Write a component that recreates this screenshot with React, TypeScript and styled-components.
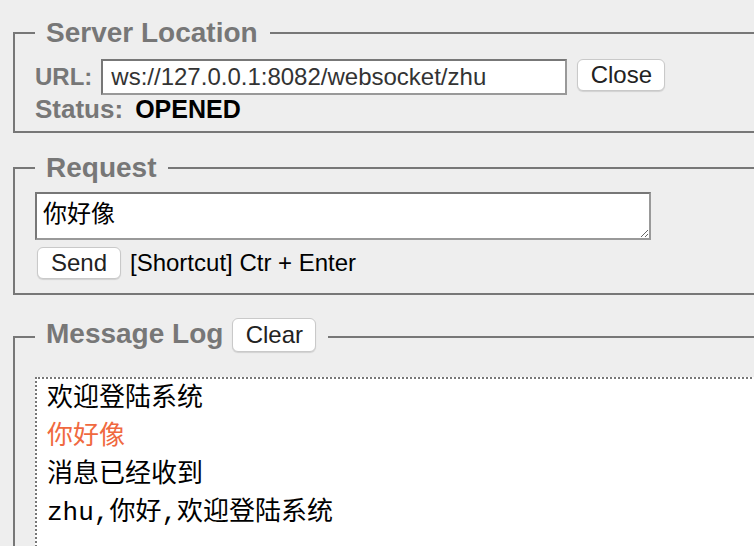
import React from 'react';
import styled, { createGlobalStyle } from 'styled-components';

const GlobalStyle = createGlobalStyle`
  html, body {
    margin: 0;
    padding: 0;
    background: #eeeeee;
    overflow: hidden;
  }
  body {
    font-family: "Liberation Sans", "Noto Sans CJK SC", Arial, sans-serif;
    font-size: 24px;
    color: #000;
  }
`;

const Page = styled.div`
  width: 1000px;
  padding-left: 13px;
`;

const Fieldset = styled.fieldset<{ $top: number; $pad: string }>`
  margin: ${(p) => p.$top}px 0 0 0;
  padding: ${(p) => p.$pad};
  border: 2px solid #777;
  width: 900px;
  min-width: 0;
`;

const Legend = styled.legend<{ $height?: number }>`
  display: flex;
  align-items: flex-start;
  padding: 0 12px 0 11px;
  height: ${(p) => (p.$height ? `${p.$height}px` : 'auto')};
  font-size: 28px;
  line-height: 32px;
  font-weight: bold;
  color: #777;
`;

const Row = styled.div<{ $mt?: number }>`
  display: flex;
  align-items: flex-start;
  margin-top: ${(p) => p.$mt ?? 0}px;
`;

const Label = styled.span`
  font-weight: bold;
  color: #777;
  line-height: 36px;
  margin-right: 9px;
`;

const UrlInput = styled.input`
  box-sizing: border-box;
  width: 466px;
  height: 36px;
  margin: 0;
  padding: 0 8px;
  border: 2px solid;
  border-color: #777 #999 #999 #777;
  background: #fff;
  font-family: "Liberation Sans", Arial, sans-serif;
  font-size: 24px;
  color: #333;
  outline: none;
`;

const Button = styled.button<{ $w: number; $h: number; $ml?: number }>`
  box-sizing: border-box;
  width: ${(p) => p.$w}px;
  height: ${(p) => p.$h}px;
  margin: 0 0 0 ${(p) => p.$ml ?? 0}px;
  padding: 0;
  border: 1px solid #c9c9c9;
  border-radius: 6px;
  background: #fff;
  box-shadow: 0 1px 1px rgba(0, 0, 0, 0.12);
  font-family: "Liberation Sans", Arial, sans-serif;
  font-size: 24px;
  font-weight: normal;
  color: #222;
  line-height: 1;
`;

const StatusLine = styled.div`
  display: flex;
  align-items: baseline;
  height: 28px;
  line-height: 28px;
  font-weight: bold;
`;

const StatusLabel = styled.span`
  color: #777;
  font-size: 26px;
`;

const StatusValue = styled.span`
  color: #000;
  font-size: 25px;
  margin-left: 12px;
`;

const RequestBox = styled.textarea`
  display: block;
  box-sizing: border-box;
  width: 616px;
  height: 48px;
  margin: 0;
  padding: 4px 6px 2px;
  border: 2px solid;
  border-color: #777 #999 #999 #777;
  background: #fff;
  font-family: "Liberation Sans", "Noto Sans CJK SC", sans-serif;
  font-size: 24px;
  line-height: 32px;
  color: #000;
  outline: none;
`;

const Hint = styled.span`
  margin-left: 9px;
  line-height: 32px;
`;

const LogBox = styled.div`
  margin-top: 21px;
  min-height: 300px;
  padding: 1px 10px;
  border: 2px dotted #777;
  background: #fff;
  font-family: "Liberation Mono", "Noto Sans CJK SC", monospace;
  font-size: 26px;
  line-height: 38px;
`;

const LogLine = styled.div<{ $color?: string }>`
  color: ${(p) => p.$color ?? '#000'};
  white-space: pre;
`;

const messages = [
  { text: '欢迎登陆系统' },
  { text: '你好像', color: '#f0693f' },
  { text: '消息已经收到' },
  { text: 'zhu,你好,欢迎登陆系统' },
];

export default function App() {
  return (
    <>
      <GlobalStyle />
      <Page>
        <Fieldset $top={17} $pad="10px 0 8px 20px">
          <Legend>Server Location</Legend>
          <Row>
            <Label>URL:</Label>
            <UrlInput defaultValue="ws://127.0.0.1:8082/websocket/zhu" />
            <Button $w={88} $h={32} $ml={10}>Close</Button>
          </Row>
          <StatusLine>
            <StatusLabel>Status:</StatusLabel>
            <StatusValue>OPENED</StatusValue>
          </StatusLine>
        </Fieldset>

        <Fieldset $top={19} $pad="8px 0 14px 20px">
          <Legend>Request</Legend>
          <RequestBox defaultValue="你好像" />
          <Row $mt={7}>
            <Button $w={84} $h={32} $ml={2}>Send</Button>
            <Hint>[Shortcut] Ctr + Enter</Hint>
          </Row>
        </Fieldset>

        <Fieldset $top={23} $pad="0 0 0 20px">
          <Legend $height={38}>
            Message Log
            <Button $w={84} $h={34} $ml={9}>Clear</Button>
          </Legend>
          <LogBox>
            {messages.map((m, i) => (
              <LogLine key={i} $color={m.color}>{m.text}</LogLine>
            ))}
          </LogBox>
        </Fieldset>
      </Page>
    </>
  );
}
